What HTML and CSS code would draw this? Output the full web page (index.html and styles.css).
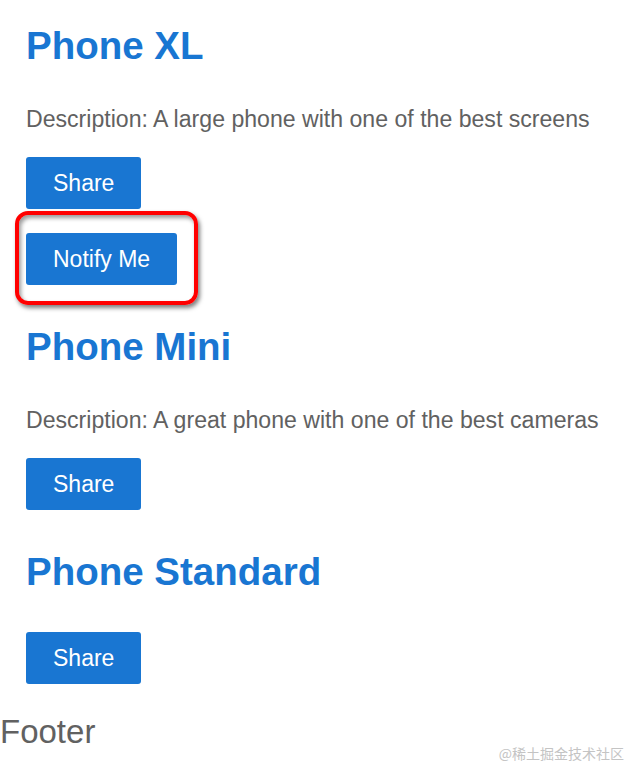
FILE: index.html
```html
<!DOCTYPE html>
<html lang="en">
<head>
<meta charset="utf-8">
<title>Products</title>
<link rel="stylesheet" href="styles.css">
</head>
<body>
<main class="list">
  <section class="product">
    <h3 class="name">Phone XL</h3>
    <p class="desc">Description: A large phone with one of the best screens</p>
    <div class="actions">
      <button class="btn">Share</button>
      <div class="alert-wrap">
        <button class="btn">Notify Me</button>
      </div>
    </div>
  </section>
  <section class="product">
    <h3 class="name">Phone Mini</h3>
    <p class="desc">Description: A great phone with one of the best cameras</p>
    <div class="actions">
      <button class="btn">Share</button>
    </div>
  </section>
  <section class="product">
    <h3 class="name">Phone Standard</h3>
    <div class="actions">
      <button class="btn">Share</button>
    </div>
  </section>
</main>
<footer class="footer">Footer</footer>
<div class="watermark">@稀土掘金技术社区</div>
</body>
</html>
```
FILE: styles.css
```css
* {
  box-sizing: border-box;
}
html, body {
  margin: 0;
  padding: 0;
  background: #ffffff;
}
body {
  font-family: "Liberation Sans", Arial, sans-serif;
  color: #616161;
  position: relative;
  min-height: 768px;
}
.list {
  padding-left: 26px;
}
.product .name {
  font-size: 38.5px;
  font-weight: bold;
  color: #1976d2;
  margin: 40px 0 38px;
  line-height: 44px;
}
.product:first-child .name {
  margin-top: 24px;
}
.desc {
  font-size: 23.1px;
  line-height: 26px;
  margin: 0 0 25px;
  color: #616161;
}
.actions {
  display: flex;
  flex-direction: column;
  align-items: flex-start;
  gap: 24px;
}
.btn {
  font-family: "Liberation Sans", Arial, sans-serif;
  font-size: 23px;
  line-height: 28px;
  padding: 12px 27px;
  background: #1976d2;
  color: #ffffff;
  border: none;
  border-radius: 3px;
  height: 52px;
}
.alert-wrap {
  position: relative;
}
.alert-wrap::after {
  content: "";
  position: absolute;
  left: -11px;
  top: -22px;
  right: -21px;
  bottom: -20px;
  border: 4.5px solid #ff0000;
  border-radius: 13px;
  box-shadow: 2px 3px 4px rgba(0, 0, 0, 0.5), inset 2px 3px 4px rgba(0, 0, 0, 0.4);
}
.footer {
  font-size: 33px;
  line-height: 37px;
  margin-top: 29px;
  color: #616161;
}
.watermark {
  position: absolute;
  right: 6px;
  bottom: 6px;
  font-family: "Noto Sans CJK SC", sans-serif;
  font-size: 14px;
  line-height: 18px;
  color: #c4c4c4;
}
```
